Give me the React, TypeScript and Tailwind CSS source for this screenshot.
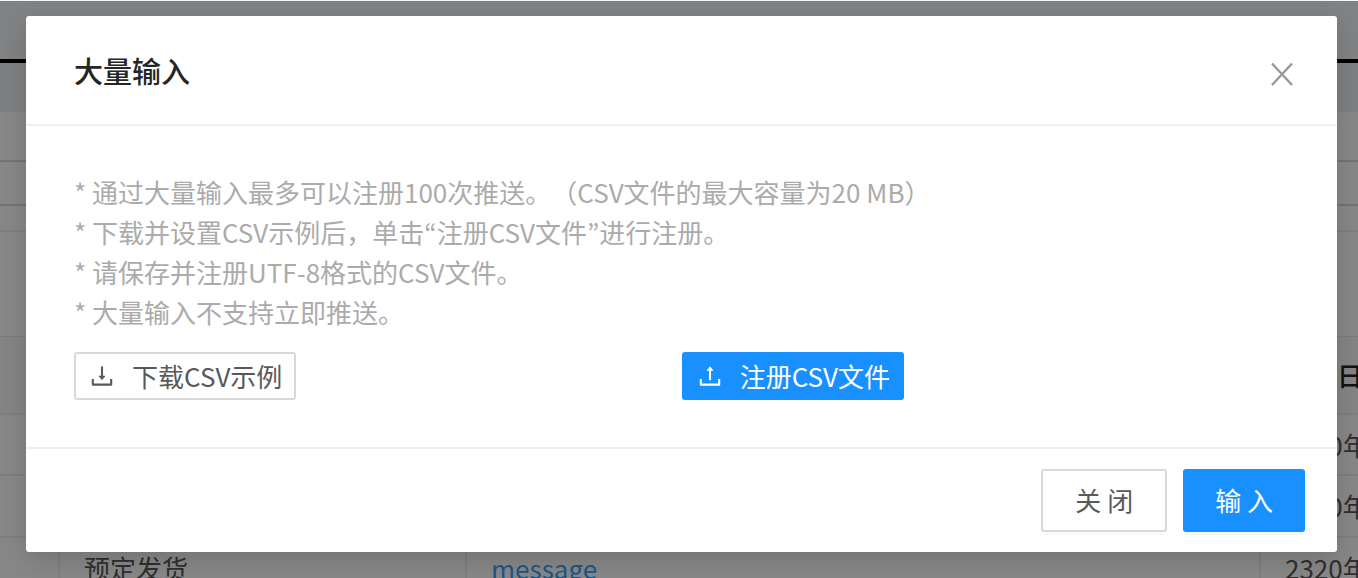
import { AiOutlineDownload, AiOutlineUpload } from 'react-icons/ai';

const rows = [
  { height: 'h-[61px]', kind: '', title: '', date: '2320年' },
  { height: 'h-[62px]', kind: '', title: '', date: '2320年' },
  { height: 'h-[62px]', kind: '预定发货', title: 'message', date: '2320年' },
];

function CloseIcon() {
  return (
    <svg viewBox="0 0 24 24" className="size-6" fill="none" stroke="currentColor" strokeWidth="2.4" aria-hidden="true">
      <path d="M2 1.5 L22 23 M22 1.5 L2 23" />
    </svg>
  );
}

function Background() {
  return (
    <main className="flex h-full flex-col overflow-hidden bg-white">
      <div className="h-[59px] shrink-0 bg-[#f3f5f7]" />
      <div className="h-1 shrink-0 bg-black" />
      <div className="h-[49px] shrink-0 bg-[#edf0f3]" />
      <div className="h-12 shrink-0" />
      <div className="h-[46px] shrink-0 border-y-2 border-[#d9d9d9]" />
      <div className="h-[26px] shrink-0 border-b-2 border-[#efefef]" />
      <div className="h-[105px] shrink-0 border-b border-[#e8e8e8]" />
      <table className="w-full table-fixed border-collapse whitespace-nowrap text-left text-[#595959]">
        <thead>
          <tr className="h-[77px] border-b-2 border-[#efefef] bg-[#fafafa] text-[#222]">
            <th className="w-[59px]" />
            <th className="w-[407px]" />
            <th />
            <th className="w-[98px] pl-[25px] font-medium">预定日期</th>
          </tr>
        </thead>
        <tbody>
          {rows.map((row, i) => (
            <tr key={i} className={`${row.height} border-b-2 border-[#efefef]`}>
              <td />
              <td className="border-l-2 border-[#efefef] pl-6">{row.kind}</td>
              <td className="border-l-2 border-[#efefef] pl-6">
                {row.title && <a href="#message" className="text-[#36a3ff]">{row.title}</a>}
              </td>
              <td className="border-l-2 border-[#efefef] pl-6">{row.date}</td>
            </tr>
          ))}
        </tbody>
      </table>
    </main>
  );
}

export default function App() {
  return (
    <div className="relative h-screen overflow-hidden font-['Noto_Sans_CJK_SC',sans-serif] text-[26px] leading-10 [text-spacing-trim:space-all]">
      <Background />
      <div className="absolute inset-x-0 top-px bottom-0 bg-black/47">
        <section
          role="dialog"
          aria-modal="true"
          aria-labelledby="dialog-title"
          className="mt-[15px] mr-[21px] ml-[26px] rounded-[3px] bg-white shadow-[0_8px_24px_rgba(0,0,0,0.15)]"
        >
          <header className="flex items-start justify-between border-b-2 border-[#efefef] pt-[34px] pr-[43px] pb-[34px] pl-12">
            <h2 id="dialog-title" className="text-[29px] leading-10 font-medium text-[#262626]">大量输入</h2>
            <button type="button" aria-label="关闭" className="flex h-10 items-end pb-1 text-[#999]">
              <CloseIcon />
            </button>
          </header>
          <div className="px-12 pt-[46px] pb-[47px]">
            <ul className="text-[#ababab]">
              <li>* 通过大量输入最多可以注册100次推送。（CSV文件的最大容量为20 MB）</li>
              <li>
                * 下载并设置CSV示例后，单击
                <span className="font-['Noto_Sans_CJK_KR',sans-serif]">“</span>注册CSV文件
                <span className="font-['Noto_Sans_CJK_KR',sans-serif]">”</span>进行注册。
              </li>
              <li>* 请保存并注册UTF-8格式的CSV文件。</li>
              <li>* 大量输入不支持立即推送。</li>
            </ul>
            <div className="mt-5 flex max-w-[830px] items-center justify-between">
              <button
                type="button"
                className="flex h-12 items-center gap-4 rounded-[3px] border-2 border-[#d9d9d9] px-3 text-[#595959]"
              >
                <AiOutlineDownload className="text-[28px]" />
                下载CSV示例
              </button>
              <button
                type="button"
                className="flex h-12 items-center gap-4 rounded-[3px] border-2 border-[#1890ff] bg-[#1890ff] px-3 text-white"
              >
                <AiOutlineUpload className="text-[28px]" />
                注册CSV文件
              </button>
            </div>
          </div>
          <footer className="flex justify-end gap-4 border-t-2 border-[#efefef] px-8 py-5">
            <button
              type="button"
              className="h-[63px] rounded-[3px] border-2 border-[#d9d9d9] px-8 pb-0.5 text-[#595959] shadow-[0_3px_0_rgba(0,0,0,0.02)]"
            >
              关 闭
            </button>
            <button
              type="button"
              className="h-[63px] rounded-[3px] bg-[#1890ff] px-8 pb-0.5 text-white shadow-[0_3px_0_rgba(0,0,0,0.04)]"
            >
              输 入
            </button>
          </footer>
        </section>
      </div>
    </div>
  );
}
